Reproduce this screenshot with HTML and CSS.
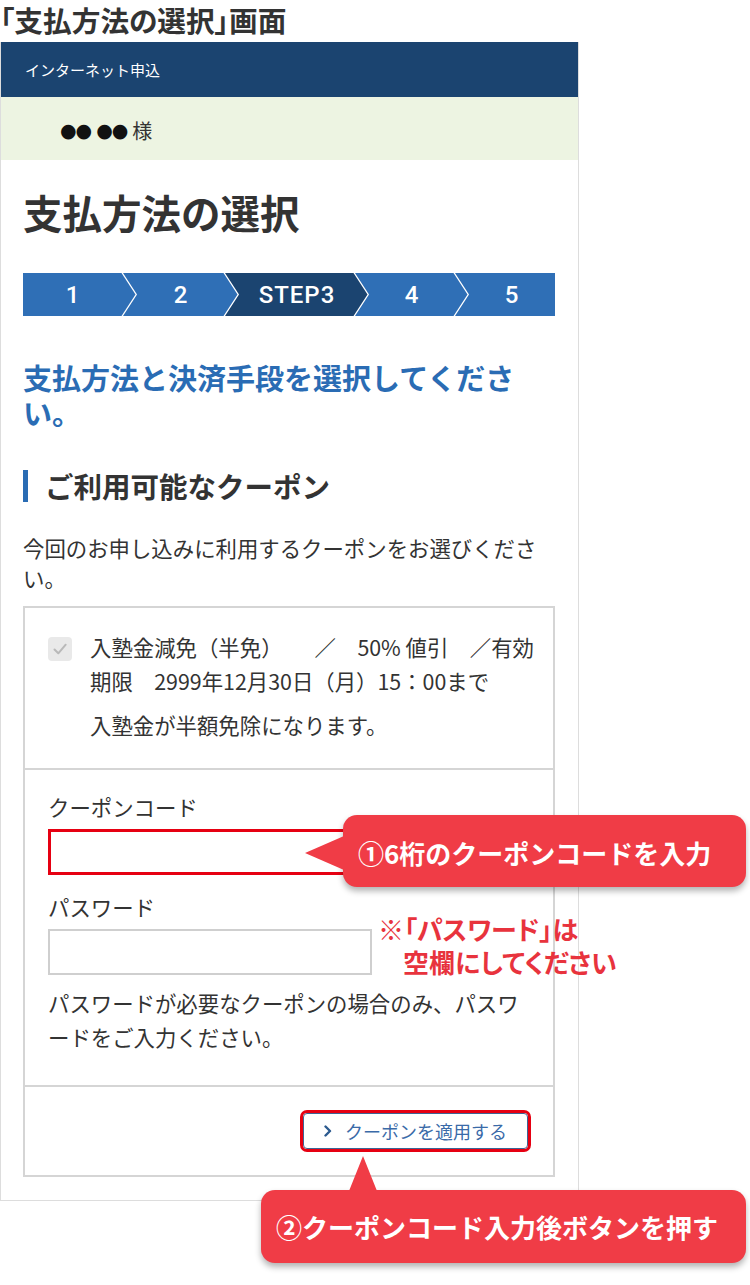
FILE: index.html
```html
<!DOCTYPE html>
<html lang="ja">
<head>
    <meta charset="UTF-8">
    <meta name="viewport" content="width=device-width, initial-scale=1.0">
    <title>「支払方法の選択」画面</title>
    <link rel="stylesheet" href="styles.css">
</head>
<body>
<div class="sheet">
    <h1 class="sheet-title">「支払方法の選択」画面</h1>

    <div class="phone">
        <header class="app-header">インターネット申込</header>
        <div class="user-bar"><span class="dots">●● ●●</span> 様</div>

        <main class="content">
            <h2 class="page-title">支払方法の選択</h2>

            <!-- step indicator -->
            <ol class="steps">
                <li class="step-first">1</li>
                <li>2</li>
                <li class="current">STEP3</li>
                <li>4</li>
                <li class="step-last">5</li>
            </ol>

            <p class="lead">支払方法と決済手段を選択してください。</p>

            <h3 class="section-title">ご利用可能なクーポン</h3>
            <p class="text">今回のお申し込みに利用するクーポンをお選びください。</p>

            <div class="coupon-box">
                <div class="coupon-row coupon-info">
                    <label class="coupon-item">
                        <span class="check">
                            <svg width="24" height="24" viewBox="0 0 24 24">
                                <rect x="0" y="0" width="24" height="24" rx="4" fill="#e9e9e9"/>
                                <path d="M6.5 12.5l3.8 3.8 7.4-8.6" fill="none" stroke="#b9b9b9" stroke-width="2" stroke-linecap="round" stroke-linejoin="round"/>
                            </svg>
                        </span>
                        <span class="coupon-name"> 入塾金減免（半免）　　／　50% 値引　／有効期限　2999年12月30日（月）15：00まで</span>
                    </label>
                    <p class="coupon-desc">入塾金が半額免除になります。</p>
                </div>

                <div class="coupon-row">
                    <div class="field">
                        <label for="coupon-code">クーポンコード</label>
                        <input type="text" id="coupon-code" class="input is-marked">
                    </div>
                    <div class="field">
                        <label for="coupon-pass">パスワード</label>
                        <input type="password" id="coupon-pass" class="input">
                    </div>
                    <p class="text note">パスワードが必要なクーポンの場合のみ、パスワードをご入力ください。</p>
                </div>

                <div class="coupon-row actions">
                    <button class="apply-btn" type="button">
                        <svg width="8" height="12" viewBox="0 0 8 12">
                            <polyline points="1.5,1.5 6,6 1.5,10.5" fill="none" stroke="#2c5a8f" stroke-width="2.4" stroke-linecap="round" stroke-linejoin="round"/>
                        </svg>
                        クーポンを適用する
                    </button>
                </div>
            </div>
        </main>
    </div>

    <!-- annotations over the screen -->
    <div class="callout callout-code">①6桁のクーポンコードを入力</div>
    <p class="red-note">※「パスワード」は<br>空欄にしてください</p>
    <div class="callout callout-button">②クーポンコード入力後ボタンを押す</div>
</div>
</body>
</html>
```

FILE: styles.css
```css
* {
    box-sizing: border-box;
}
body {
    margin: 0;
    padding: 0;
    background: #fff;
    color: #333;
    font-family: "Noto Sans CJK JP", "Noto Sans", sans-serif;
}
.sheet {
    position: relative;
    width: 750px;
    height: 1285px;
}
.sheet-title {
    margin: 0 0 4px;
    padding-top: 1px;
    font-size: 28.7px;
    line-height: 37px;
    font-weight: 700;
    font-feature-settings: "palt";
    color: #333;
}
.phone {
    width: 579px;
    border: 1px solid #ddd;
    border-top: none;
}
.app-header {
    height: 55px;
    display: flex;
    align-items: center;
    padding-left: 24px;
    background: #1b4470;
    color: #fff;
    font-size: 15px;
}
.user-bar {
    height: 63px;
    display: flex;
    align-items: center;
    gap: 5px;
    padding: 3px 0 0 59px;
    background: #edf4e2;
    font-size: 20px;
}
.user-bar .dots {
    font-family: "DejaVu Sans", sans-serif;
    font-size: 19px;
    letter-spacing: -1px;
    color: #111;
}
.content {
    padding: 28px 23px 23px 22px;
}
.page-title {
    margin: 0;
    font-size: 39.5px;
    line-height: 48px;
    font-weight: 700;
}

/* steps */
.steps {
    display: flex;
    list-style: none;
    margin: 37px 0 0;
    padding: 0;
    height: 43px;
}
.steps li {
    flex: none;
    display: flex;
    align-items: center;
    justify-content: center;
    width: 116px;
    margin-right: -14px;
    padding: 0 14px;
    background: #2f6fb6;
    color: #fff;
    font-family: Roboto, "Noto Sans", sans-serif;
    font-weight: 500;
    font-size: 24px;
    letter-spacing: 1px;
    clip-path: polygon(0 0, calc(100% - 15.5px) 0, calc(100% - 1.5px) 50%, calc(100% - 15.5px) 100%, 0 100%, 14px 50%);
}
.steps .step-first {
    width: 114px;
    padding-left: 0;
    clip-path: polygon(0 0, calc(100% - 15.5px) 0, calc(100% - 1.5px) 50%, calc(100% - 15.5px) 100%, 0 100%);
}
.steps .current {
    width: 144px;
    background: #1b4470;
}
.steps li:nth-child(4) {
    width: 114px;
}
.steps .step-last {
    flex: 1;
    width: auto;
    margin-right: 0;
    padding-right: 0;
    clip-path: polygon(0 0, 100% 0, 100% 100%, 0 100%, 14px 50%);
}

.lead {
    margin: 44px 0 0;
    color: #2a6cb4;
    font-size: 29px;
    line-height: 35px;
    font-weight: 700;
}
.section-title {
    margin: 40px 0 0;
    padding-left: 17px;
    border-left: 5px solid #2a6cb4;
    font-size: 28.5px;
    line-height: 32px;
    font-weight: 700;
}
.text {
    margin: 31px 0 0;
    font-size: 21.4px;
    line-height: 30px;
}

/* coupon box */
.coupon-box {
    margin-top: 13px;
    border: 2px solid #d5d5d5;
}
.coupon-row {
    padding: 22px 23px 31px;
    border-bottom: 2px solid #d5d5d5;
}
.coupon-row:last-child {
    border-bottom: none;
}
.coupon-info {
    padding: 22px 16px 26px 23px;
}
.coupon-item {
    display: flex;
    gap: 18px;
    font-size: 21.4px;
    line-height: 34px;
}
.check {
    flex: none;
    height: 24px;
    margin-top: 7px;
}
.check svg {
    display: block;
}
.coupon-desc {
    margin: 10px 0 0 42px;
    font-size: 21.4px;
    line-height: 34px;
}
.field + .field {
    margin-top: 17px;
}
.field label {
    display: block;
    font-size: 21.4px;
    line-height: 30px;
}
.input {
    display: block;
    width: 324px;
    height: 46px;
    margin-top: 7px;
    border: 2px solid #cfcfcf;
    background: #fff;
}
.input.is-marked {
    border: 3px solid #e60012;
}
.note {
    margin-top: 11px;
    line-height: 34px;
}
.actions {
    display: flex;
    padding: 26px 25px 26px 23px;
}
.apply-btn {
    margin-left: auto;
    display: inline-flex;
    align-items: center;
    gap: 13px;
    height: 36px;
    padding: 0 20px 0 20px;
    border: 1px solid #3c6596;
    border-radius: 4px;
    outline: 3px solid #e60012;
    background: #fff;
    color: #3a6aa8;
    font-family: inherit;
    font-size: 18px;
}

/* annotations */
.callout {
    position: absolute;
    display: flex;
    align-items: center;
    padding-left: 15px;
    background: #f03c46;
    color: #fff;
    font-size: 26px;
    font-weight: 700;
    border-radius: 14px;
    box-shadow: 0 4px 6px rgba(0, 0, 0, .3);
}
.callout::before {
    content: "";
    position: absolute;
    background: #f03c46;
}
.callout-code {
    left: 343px;
    top: 815px;
    width: 403px;
    height: 72px;
    padding-top: 3px;
}
.callout-code::before {
    left: -38px;
    top: 21px;
    width: 39px;
    height: 34px;
    clip-path: polygon(0 50%, 100% 0, 100% 100%);
}
.callout-button {
    left: 261px;
    top: 1190px;
    width: 485px;
    height: 73px;
}
.callout-button::before {
    left: 88px;
    top: -34px;
    width: 28px;
    height: 35px;
    clip-path: polygon(50% 0, 100% 100%, 0 100%);
}
.red-note {
    position: absolute;
    left: 378px;
    top: 912px;
    margin: 0;
    padding-left: 25px;
    text-indent: -25px;
    color: #e8333d;
    font-size: 26px;
    line-height: 33px;
    font-weight: 700;
    font-feature-settings: "palt";
}
```
